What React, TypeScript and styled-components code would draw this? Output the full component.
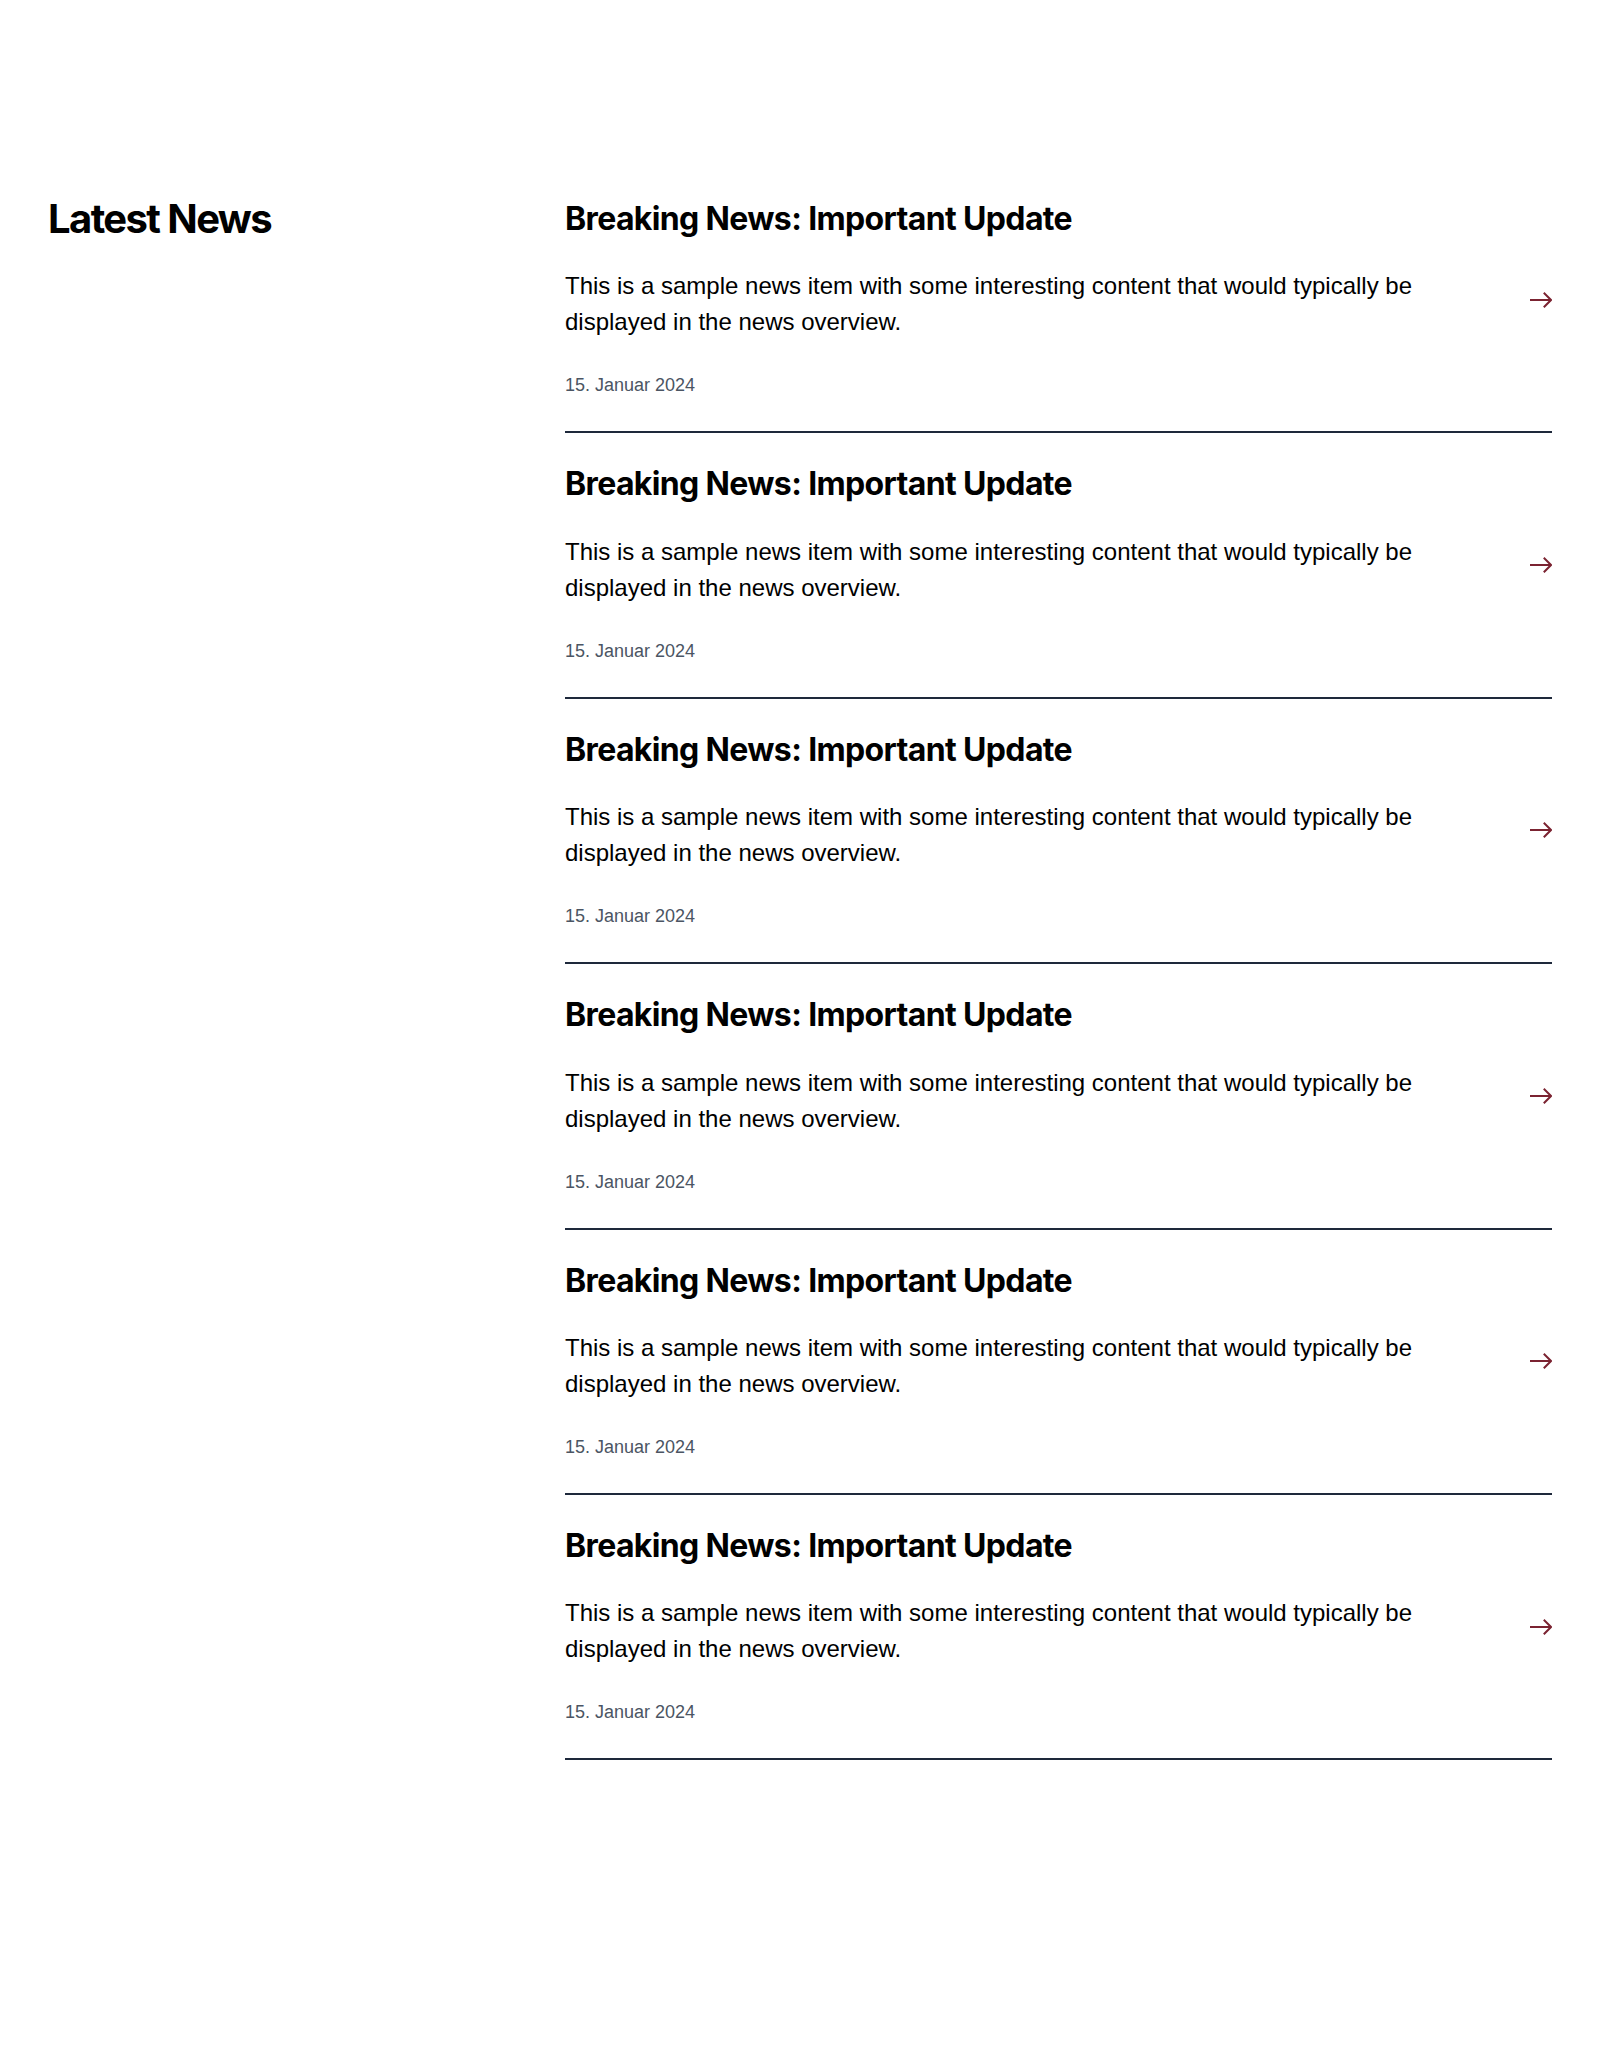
import React from "react";
import styled, { createGlobalStyle } from "styled-components";

const GlobalStyle = createGlobalStyle`
  html, body { margin: 0; padding: 0; background: #ffffff; }
  body { font-family: "Liberation Sans", Arial, sans-serif; color: #000; }
  * { box-sizing: border-box; }
`;

const Section = styled.section`
  padding: 200px 48px 200px;
  display: grid;
  grid-template-columns: 493px 1fr;
  column-gap: 24px;
  align-items: start;
`;

const Title = styled.h2`
  margin: 0;
  font-family: Inter, "Noto Sans", sans-serif;
  font-weight: 700;
  font-size: 40px;
  line-height: 0.95;
  letter-spacing: -0.04em;
  color: #000;
`;

const List = styled.div`
  display: flex;
  flex-direction: column;
`;

const Item = styled.article`
  display: flex;
  align-items: center;
  gap: 48px;
  padding: 32px 0 32px;
  border-bottom: 2px solid #1e293b;
  &:first-child { padding-top: 0; }
`;

const Content = styled.div`
  flex: 1;
  min-width: 0;
`;

const Headline = styled.h3`
  margin: 0 0 30px;
  font-family: Inter, "Noto Sans", sans-serif;
  font-weight: 700;
  font-size: 32px;
  line-height: 1.2;
  letter-spacing: -0.02em;
  color: #000;
`;

const Body = styled.p`
  margin: 0 0 32px;
  font-family: "Liberation Sans", Arial, sans-serif;
  font-size: 24px;
  line-height: 36px;
  color: #000;
`;

const DateText = styled.time`
  display: block;
  font-family: "Liberation Sans", Arial, sans-serif;
  font-size: 18px;
  line-height: 27px;
  color: #4b5563;
`;

const ArrowLink = styled.a`
  flex: none;
  display: flex;
  color: #7b2331;
`;

const Arrow = () => (
  <svg width="22" height="16" viewBox="0 0 22 16" fill="none" stroke="currentColor" strokeWidth="2" strokeLinecap="square">
    <path d="M1 8h19" />
    <path d="M14.5 1.5 21 8l-6.5 6.5" />
  </svg>
);

const items = Array.from({ length: 6 }, (_, i) => ({
  id: i,
  title: "Breaking News: Important Update",
  text: "This is a sample news item with some interesting content that would typically be displayed in the news overview.",
  date: "15. Januar 2024",
}));

export default function App() {
  return (
    <>
      <GlobalStyle />
      <Section>
        <Title>Latest News</Title>
        <List>
          {items.map((it) => (
            <Item key={it.id}>
              <Content>
                <Headline>{it.title}</Headline>
                <Body>{it.text}</Body>
                <DateText>{it.date}</DateText>
              </Content>
              <ArrowLink href="#" aria-label="Read more">
                <Arrow />
              </ArrowLink>
            </Item>
          ))}
        </List>
      </Section>
    </>
  );
}
